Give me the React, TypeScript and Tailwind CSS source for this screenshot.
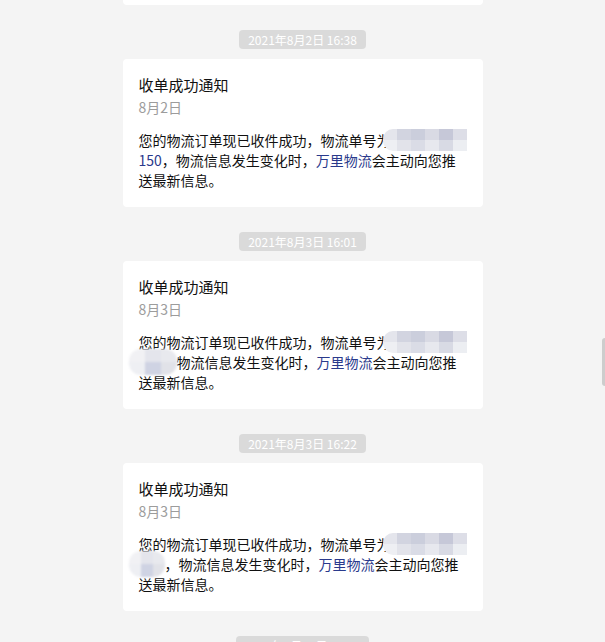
import React from "react";

type Notice = {
  time: string;
  date: string;
  // 第二行开头的单号尾段：显示数字，或者打码
  tail: "digits" | "maskWide" | "maskNarrow";
};

const notices: Notice[] = [
  { time: "2021年8月2日 16:38", date: "8月2日", tail: "digits" },
  { time: "2021年8月3日 16:01", date: "8月3日", tail: "maskWide" },
  { time: "2021年8月3日 16:22", date: "8月3日", tail: "maskNarrow" },
];

const font = {
  fontFamily: '"Noto Sans CJK SC", "Noto Sans", sans-serif',
};

// 单号打码块（马赛克），不撑高行框
function MosaicLong() {
  const top = ["bg-[#e4e5ec]", "bg-[#d2d4e0]", "bg-[#cbcedc]", "bg-[#d9dae4]", "bg-[#c6c8d8]", "bg-[#dddee7]"];
  const bottom = ["bg-[#eeeff3]", "bg-[#e2e3ea]", "bg-[#dadce6]", "bg-[#e7e8ee]", "bg-[#d8dae4]", "bg-[#eceef2]"];
  return (
    <span className="relative -ml-[8px] inline-block h-[20px] w-[84px] align-top">
      <span className="absolute inset-x-0 -top-[1px] -bottom-[1px] grid grid-cols-6 grid-rows-2 overflow-hidden rounded-l-[10px] blur-[0.6px]">
        {top.map((c, i) => (
          <span key={"t" + i} className={c} />
        ))}
        {bottom.map((c, i) => (
          <span key={"b" + i} className={c} />
        ))}
      </span>
    </span>
  );
}

function MosaicShort({ wide }: { wide: boolean }) {
  return (
    <span
      className={`relative -ml-[10px] inline-block h-[20px] align-top ${
        wide ? "w-[48px]" : "w-[36px]"
      }`}
    >
      <span className="absolute inset-x-0 -top-[3px] -bottom-[3px] grid grid-cols-3 grid-rows-2 overflow-hidden rounded-[12px] blur-[0.8px]">
        <span className="bg-[#f1f1f4]" />
        <span className="bg-[#e4e5ec]" />
        <span className="bg-[#e8e9ee]" />
        <span className="bg-[#eeeff3]" />
        <span className="bg-[#cfd3e3]" />
        <span className="bg-[#e1e2e8]" />
      </span>
    </span>
  );
}

function Card({ n }: { n: Notice }) {
  return (
    <div className="rounded bg-white px-4 pb-[17px] pt-[15px]">
      <div className="text-[15px] leading-[22px] text-[#111]">收单成功通知</div>
      <div className="text-[14px] leading-[22px] text-[#9c9c9c]">{n.date}</div>
      <div className="mt-3 text-[14px] leading-[20px] text-[#111]">
        您的物流订单现已收件成功，物流单号为
        <MosaicLong />
        <br />
        {n.tail === "digits" && <span className="text-[#2a3a8c]">150</span>}
        {n.tail === "maskWide" && <MosaicShort wide />}
        {n.tail === "maskNarrow" && <MosaicShort wide={false} />}
        {n.tail === "maskWide" ? "" : "，"}
        物流信息发生变化时，<span className="text-[#2a3a8c]">万里物流</span>
        会主动向您推
        <br />
        送最新信息。
      </div>
    </div>
  );
}

function TimeTag({ text }: { text: string }) {
  return (
    <div className="flex justify-center">
      <span className="rounded-sm bg-[#dadada] px-[9px] text-[12px] leading-[19px] text-white">
        {text}
      </span>
    </div>
  );
}

export default function App() {
  return (
    <div className="relative h-[642px] overflow-hidden bg-[#f4f4f4]" style={font}>
      <div className="mx-auto w-[360px]">
        {/* 上一条消息的尾部 */}
        <div className="h-[5px] rounded-b bg-white" />
        {notices.map((n) => (
          <div key={n.time} className="pt-[25px]">
            <TimeTag text={n.time} />
            <div className="mt-[10px]">
              <Card n={n} />
            </div>
          </div>
        ))}
        <div className="pt-[25px]">
          <TimeTag text="2021年8月23日 16:30" />
        </div>
      </div>
      {/* 滚动条 */}
      <div className="absolute right-0 top-[338px] h-[48px] w-[3px] rounded-l-sm bg-[#cdcdcd]" />
    </div>
  );
}
